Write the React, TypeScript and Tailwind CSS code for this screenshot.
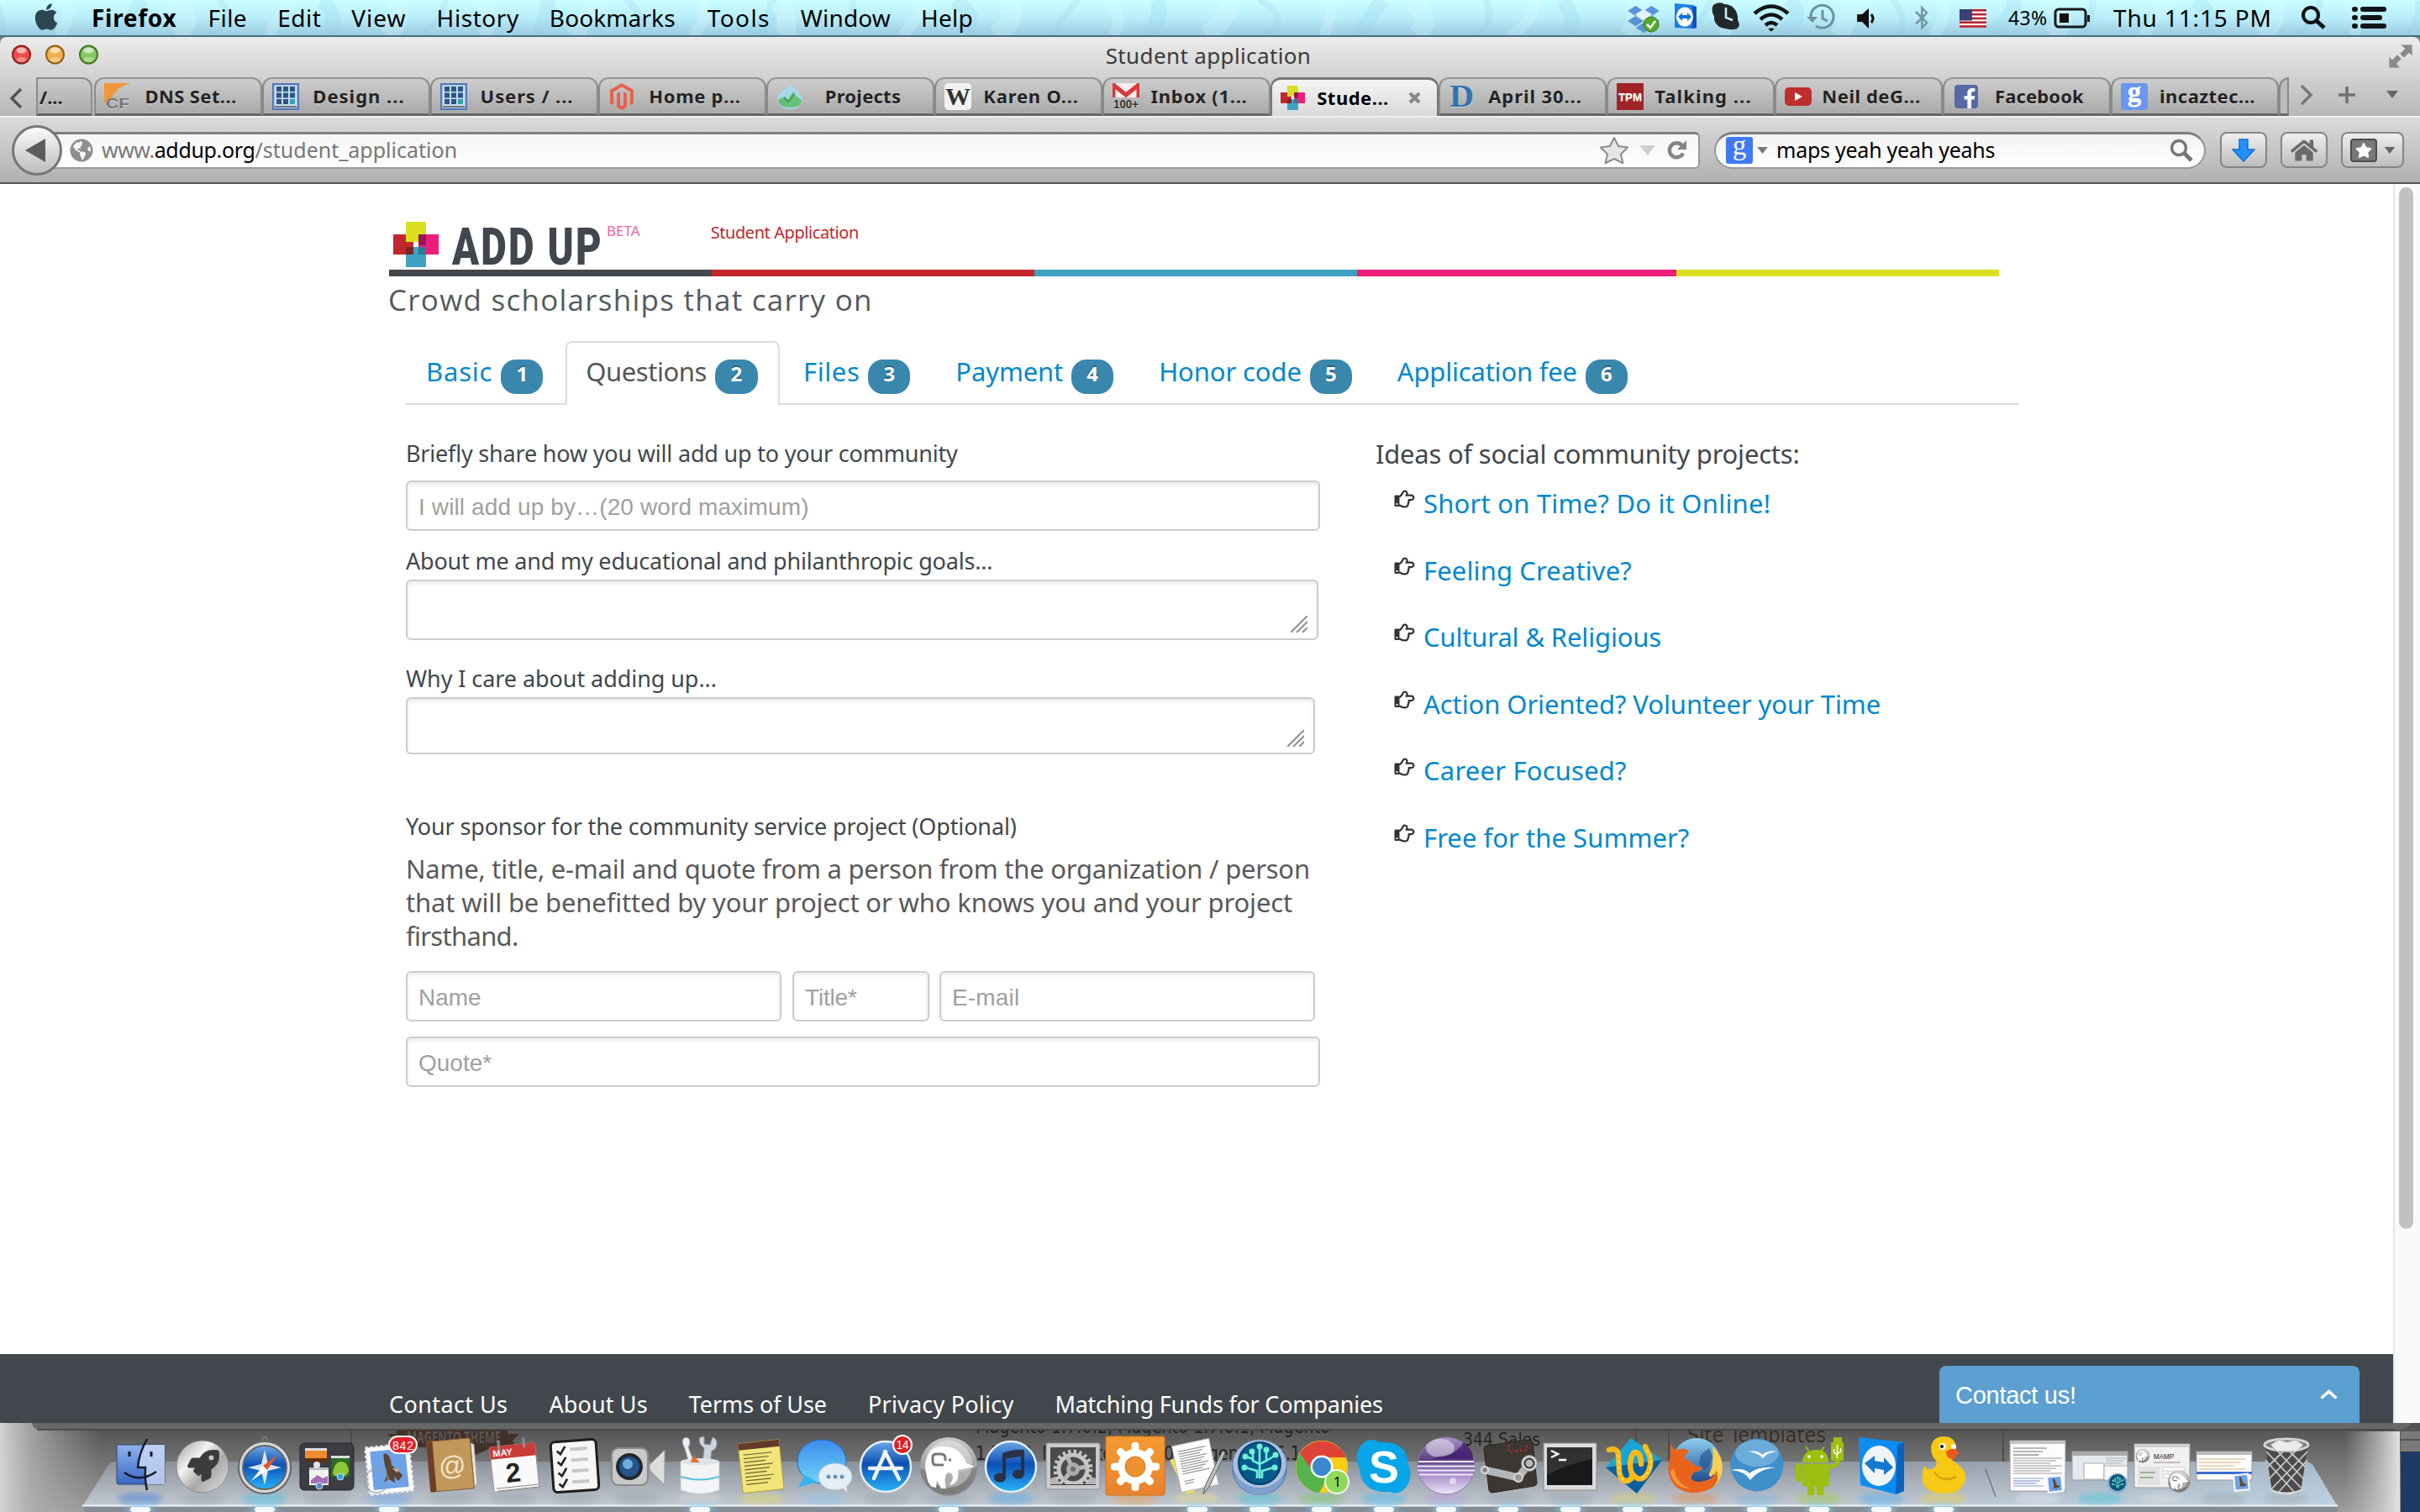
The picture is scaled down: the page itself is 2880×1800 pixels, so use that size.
import React, { useLayoutEffect, useRef } from 'react';
import {
  FaApple, FaDropbox, FaBluetoothB, FaHome, FaGlobeAmericas, FaMagento,
  FaFacebookF, FaStar, FaRegHandPointRight, FaRocket,
} from 'react-icons/fa';

const noto = "font-['Noto_Sans','Open_Sans',sans-serif]";
const sans = "font-['Liberation_Sans',Arial,sans-serif]";

/* A single line of text tracked so that it fills the given width. */
function Fit({ w, children, className = '' }: { w: number; children: string; className?: string }) {
  const ref = useRef<HTMLSpanElement>(null);
  useLayoutEffect(() => {
    const el = ref.current;
    if (!el) return;
    el.style.letterSpacing = '0px';
    const natural = el.offsetWidth;
    el.style.letterSpacing = `${(w - natural) / children.length}px`;
  }, [w, children]);
  return <span ref={ref} className={`inline-block shrink-0 whitespace-pre ${className}`}>{children}</span>;
}

const Caret = ({ className = '' }) => (
  <svg className={className} viewBox="0 0 14 9"><path d="M0 0h14L7 9z" fill="currentColor" /></svg>
);

/* ---------- menu bar ---------- */
function MenuBar() {
  return (
    <header className={`relative flex h-11 shrink-0 items-stretch overflow-hidden border-b-2 border-[#44707f] bg-linear-to-b from-[#c9ffff] via-[#b9eefb] to-[#9ccbe0] text-[28px] leading-[43px] text-black ${noto}`}>
      <svg className="absolute inset-0 h-full w-full opacity-40" viewBox="0 0 2880 44" preserveAspectRatio="none">
        {Array.from({ length: 48 }, (_, i) => (
          <path key={i} d={`M${i * 62 + (i * 37) % 29} 44 q${8 + (i % 5) * 6} -22 ${(i % 3) * 18 - 8} -44`} stroke={i % 2 ? '#e6ffff' : '#8fcbe8'} strokeWidth={8 + (i % 4) * 5} fill="none" opacity=".55" />
        ))}
      </svg>
      <div className="relative flex w-full">
        <FaApple className="mt-[2px] ml-[38px] h-9 w-[34px] text-[#2c4652]" />
        <Fit w={101} className="ml-[37px] font-bold">Firefox</Fit>
        <Fit w={47} className="ml-[37px]">File</Fit>
        <Fit w={52} className="ml-9">Edit</Fit>
        <Fit w={65} className="ml-[36px]">View</Fit>
        <Fit w={98} className="ml-[36px]">History</Fit>
        <Fit w={150} className="ml-[36px]">Bookmarks</Fit>
        <Fit w={75} className="ml-[38px]">Tools</Fit>
        <Fit w={107} className="ml-[36px]">Window</Fit>
        <Fit w={62} className="ml-[36px]">Help</Fit>
        <div className="flex-1" />
        <svg className="h-[42px] w-[918px] shrink-0" viewBox="1930 0 918 42">
          <g transform="translate(1937 4)">
            <FaDropbox x="0" y="0" size={38} color="#5b93d8" />
            <path d="M9 13l10-6 10 6-10 7z" fill="#e3f3fd" />
            <circle cx="28" cy="25" r="9" fill="#55a82c" stroke="#3b7d1c" /><path d="M23 25l4 4 6-8" stroke="#fff" strokeWidth="2.500" fill="none" />
          </g>
          <path d="M1993 4l22 2 4 2v25l-5 1-21-1z" fill="#1b7fea" /><path d="M2014 8h5v25l-5 1z" fill="#1150c0" />
          <ellipse cx="2005" cy="20" rx="10" ry="11.500" fill="#fff" /><path d="M1997 20l5-5v3h6v-3l5 5-5 5v-3h-6v3z" fill="#1271dd" />
          <path d="M2039 6c5-4 11-3 13-1 10 0 17 8 16 19 4 6 1 11-5 11-5 1-7-1-10-1-9-1-14-8-13-15-3-4-3-10-1-13z" fill="#22282b" />
          <path d="M2054 9v12l8 3" stroke="#c8f3fb" strokeWidth="2.500" fill="none" />
          <g fill="none" stroke="#0f1416" strokeWidth="4.500">
            <path d="M2088 16q20-17 40 0" /><path d="M2095 23q13-11 26 0" /><path d="M2101 30q7-6 14 0" />
          </g>
          <path d="M2108 37.500l-3.500-3q3.500-2 7 0z" />
          <g stroke="#6f929e" strokeWidth="3" fill="none"><path d="M2155 20a13.500 13.500 0 1 1 6 11" /><path d="M2169 12v10l6 3" /></g><path d="M2150 20h13l-6 7z" fill="#6f929e" />
          <path d="M2210 17h6l8-7v24l-8-8h-6z" fill="#111" /><path d="M2227 17q4 5 0 10" stroke="#111" strokeWidth="3" fill="none" />
          <FaBluetoothB x="2272" y="6" size={30} color="#7498a5" />
          <g><rect x="2332" y="11" width="32" height="22" fill="#fff" />
            {[11, 15.8, 20.6, 25.4, 30.2].map((y) => <rect key={y} x="2332" y={y} width="32" height="2.600" fill="#b9202c" />)}
            <rect x="2332" y="11" width="15" height="13.500" fill="#3b3f74" /></g>
          <rect x="2446" y="11" width="36" height="21" rx="4" fill="none" stroke="#15191b" strokeWidth="3" /><rect x="2451" y="16" width="11" height="11" fill="#111" /><rect x="2484" y="18" width="3" height="8" fill="#111" />
          <g stroke="#0d1011" fill="none" strokeWidth="4"><circle cx="2750" cy="18" r="9" /><path d="M2757 25l9 8" strokeWidth="5" /></g>
          <g fill="#101517">
            {[8, 18, 28].map((y, i) => <React.Fragment key={y}><rect x="2799" y={y} width="7" height="6" rx="3" /><rect x={2809} y={y} width={i === 1 ? 26 : 31} height="6" rx="3" /></React.Fragment>)}
          </g>
          <text x="2390" y="30" fontSize="23" textLength="46" fontFamily="Noto Sans">43%</text>
          <text x="2515" y="32" fontSize="28" textLength="188" fontFamily="Noto Sans">Thu 11:15 PM</text>
        </svg>
        <div className="w-8" />
      </div>
    </header>
  );
}

/* ---------- browser chrome ---------- */
const GIcon = ({ soft = false }) => (
  <svg viewBox="0 0 32 32" className="h-full w-full"><rect width="32" height="32" rx="3" fill={soft ? '#6a97ee' : '#4079f5'} />
    <text x="16" y="21" textAnchor="middle" fontSize="33" fill="#fff" fontFamily="Liberation Serif">g</text></svg>
);
const GridIcon = () => (
  <svg viewBox="0 0 32 32" className="h-full w-full"><rect x="1" y="1" width="30" height="30" fill="#c7dcee" stroke="#5577b8" strokeWidth="2.5" />
    {[0, 1, 2].map((r) => [0, 1, 2].map((c) => <rect key={`${r}${c}`} x={5 + c * 8} y={4 + r * 7.5} width="6" height="6" fill={r === 2 && c === 2 ? '#35a3a5' : '#2c5688'} />))}
    <path d="M3 28h26" stroke="#777" strokeWidth="2" /></svg>
);
const PlusMark = () => (
  <svg viewBox="0 0 54 54" className="h-full w-full">
    <rect x="15" y="0" width="24" height="24" fill="#d9e021" /><rect x="0" y="15" width="24" height="24" fill="#c1272d" />
    <rect x="30" y="15" width="24" height="24" fill="#ec1e79" /><rect x="15" y="30" width="24" height="24" fill="#3fa2c0" />
    <path d="M15 15h9v9h-9z" fill="#d9e021" /><path d="M30 15h9v13h-9z" fill="#98155a" /><path d="M15 30h9v9h-9z" fill="#7b2327" /><path d="M30 30h9v9h-9z" fill="#2d7b92" />
    <rect x="24" y="24" width="6" height="6" fill="#fff" /></svg>
);

const tabs: { t: string; w: number; icon: React.ReactNode; active?: boolean }[] = [
  { t: 'DNS Set...', w: 109, icon: <svg viewBox="0 0 32 32"><path d="M0 0h32q-18 4-24 20l-8 4z" fill="#f0973c" /><text x="2" y="30" fontSize="17" fontWeight="700" fill="#777" textLength="28" lengthAdjust="spacingAndGlyphs" fontFamily="Liberation Sans">CF</text></svg> },
  { t: 'Design ...', w: 109, icon: <GridIcon /> },
  { t: 'Users / ...', w: 111, icon: <GridIcon /> },
  { t: 'Home p...', w: 109, icon: <FaMagento className="h-8 w-8 text-[#e8604c]" /> },
  { t: 'Projects', w: 90, icon: <svg viewBox="0 0 32 32"><path d="M16 1C22 7 31 12 31 20a15 11 0 0 1-30 0C1 12 10 7 16 1z" fill="#a7d8e8" /><path d="M2 20l8-4 4 4 6-10 4 6 6 4q0 9-14 9T2 20z" fill="#68bf78" /><path d="M9 17l5 5 7-9" stroke="#4aa45b" strokeWidth="2.5" fill="none" /></svg> },
  { t: 'Karen O...', w: 113, icon: <svg viewBox="0 0 32 32"><rect width="32" height="32" rx="5" fill="#f2f2f2" /><text x="1" y="26" fontSize="29" textLength="30" lengthAdjust="spacingAndGlyphs" fill="#333" fontFamily="Liberation Serif">W</text></svg> },
  { t: 'Inbox (1...', w: 115, icon: <svg viewBox="0 0 32 32"><rect width="32" height="17" fill="#f4eeee" /><path d="M1 17V2l15 12L31 2v15" stroke="#d8393b" strokeWidth="5" fill="none" /><text x="1" y="30" fontSize="15" fontWeight="700" textLength="30" lengthAdjust="spacingAndGlyphs" fill="#333" fontFamily="Liberation Sans">100+</text></svg> },
  { t: 'Stude...', w: 86, icon: <div className="h-[29px] w-[29px]"><PlusMark /></div>, active: true },
  { t: 'April 30...', w: 112, icon: <svg viewBox="0 0 32 32"><text x="1" y="28" fontSize="37" fontWeight="700" textLength="29" lengthAdjust="spacingAndGlyphs" fill="#3174b0" fontFamily="Liberation Serif">D</text></svg> },
  { t: 'Talking ...', w: 115, icon: <svg viewBox="0 0 32 32"><rect width="32" height="32" fill="#a02326" /><text x="2" y="21" fontSize="13" textLength="28" lengthAdjust="spacingAndGlyphs" fill="#fff" fontWeight="700" fontFamily="Liberation Sans">TPM</text></svg> },
  { t: 'Neil deG...', w: 117, icon: <svg viewBox="0 0 32 32"><rect y="5" width="32" height="22" rx="5" fill="#bf2e2e" /><path d="M12 11v10l9-5z" fill="#fff" /></svg> },
  { t: 'Facebook', w: 106, icon: <div className="ml-[2px] flex h-7 w-7 items-end justify-end rounded-sm bg-[#5769a5] text-white"><FaFacebookF className="h-6 w-5" /></div> },
  { t: 'incaztec...', w: 114, icon: <GIcon soft /> },
];

function TabStrip() {
  return (
    <div className={`flex h-[46px] shrink-0 items-end text-[22px] font-bold text-[#232323] [text-shadow:0_1px_0_rgba(255,255,255,0.5)] ${noto}`}>
      <svg className="mb-2 ml-[11px] h-[26px] w-[17px] shrink-0" viewBox="0 0 17 26"><path d="M14 2L3 13l11 11" fill="none" stroke="#555" strokeWidth="3.5" /></svg>
      <div className="ml-[15px] h-[46px] w-[67px] shrink-0 rounded-tr-xl border-t-2 border-r-2 border-b-3 border-l-2 border-[#8d8d8d] border-b-[#666] bg-linear-to-b from-[#cbcbcb] to-[#ababab] pl-[2px] leading-[42px]">/...</div>
      <div className="flex w-[2602px] shrink-0 pl-[2px]">
        {tabs.map((tab) => (
          <div key={tab.t} className={tab.active
            ? 'flex h-[46px] w-[200px] shrink-0 items-center rounded-t-xl border-x-2 border-t-3 border-[#777] bg-linear-to-b from-[#f4f4f4] to-[#dadada] text-black'
            : 'flex h-[46px] w-[200px] shrink-0 items-center rounded-t-xl border-x-2 border-t-2 border-b-3 border-x-[#8a8a8a] border-t-[#939393] border-b-[#666] bg-linear-to-b from-[#cdcdcd] to-[#aaaaaa]'}>
            <div className="ml-[10px] flex h-8 w-8 shrink-0 items-center [&>svg]:h-8 [&>svg]:w-8">{tab.icon}</div>
            <div className={tab.active ? 'w-[108px] text-center' : 'w-[142px] text-center'}><Fit w={tab.w}>{tab.t}</Fit></div>
            {tab.active && <svg className="ml-[12px] h-[15px] w-[15px]" viewBox="0 0 15 15"><path d="M2 2l11 11M13 2L2 13" stroke="#888" strokeWidth="4" /></svg>}
          </div>
        ))}
      </div>
      <div className="h-[46px] w-[12px] shrink-0 rounded-tl-xl border-t-2 border-r-2 border-b-3 border-l-2 border-[#8a8a8a] border-b-[#666] bg-[#bcbcbc]" />
      <svg className="mb-3 ml-[12px] h-[26px] w-[17px] shrink-0" viewBox="0 0 17 26"><path d="M3 2l11 11L3 24" fill="none" stroke="#777" strokeWidth="3.5" /></svg>
      <svg className="mb-[15px] ml-[30px] h-5 w-5 shrink-0" viewBox="0 0 20 20"><path d="M10 0v20M0 10h20" stroke="#6f6f6f" strokeWidth="3.5" /></svg>
      <Caret className="mb-[21px] ml-[37px] h-[9px] w-[14px] shrink-0 text-[#666]" />
    </div>
  );
}

const toolBtn = 'flex h-[43px] shrink-0 items-center justify-center rounded-lg border-2 border-[#858585] bg-linear-to-b from-[#efefef] to-[#bdbdbd]';

function Toolbar() {
  return (
    <div className={`flex h-[79px] shrink-0 items-center border-t-2 border-[#f0f0f0] bg-linear-to-b from-[#dbdbdb] to-[#b1b1b1] text-[25px] ${noto}`}>
      <div className="z-10 ml-[14px] flex h-[60px] w-[60px] shrink-0 items-center justify-center rounded-full border-3 border-[#777] bg-linear-to-b from-[#fbfbfb] to-[#bdbdbd]">
        <svg className="mr-1 h-7 w-6" viewBox="0 0 24 28"><path d="M24 0v28L0 14z" fill="#5c5c5c" /></svg>
      </div>
      <div className="-ml-[20px] flex h-11 w-[1969px] shrink-0 items-center rounded-r-md border-2 border-t-3 border-[#989898] border-t-[#7d7d7d] bg-linear-to-b from-[#f6f6f6] to-white">
        <FaGlobeAmericas className="ml-[27px] h-7 w-7 text-[#8e8e8e]" />
        <Fit w={63} className="ml-[10px] text-[#777]">www.</Fit>
        <Fit w={120} className="text-black">addup.org</Fit>
        <Fit w={241} className="text-[#777]">/student_application</Fit>
        <div className="flex-1" />
        <svg className="h-8 w-[34px]" viewBox="0 0 34 32"><path d="M17 1l5 10 11 1.500-8 8 2.500 11L17 26 6.500 31.500 9 20.500l-8-8L12 11z" fill="#e6e6e6" stroke="#8c8c8c" strokeWidth="2" strokeLinejoin="round" /></svg>
        <Caret className="ml-[13px] h-[14px] w-[19px] text-[#cfcfcf]" />
        <svg className="mr-[13px] ml-[14px] h-6 w-6" viewBox="0 0 24 24"><path d="M19 15.500a8.500 8.500 0 1 1-1-9" fill="none" stroke="#858585" strokeWidth="4.500" /><path d="M23 0v11H12z" fill="#858585" /></svg>
      </div>
      <div className="ml-[17px] flex h-11 w-[585px] shrink-0 items-center rounded-full border-2 border-t-3 border-[#989898] border-t-[#7d7d7d] bg-linear-to-b from-[#f3f3f3] to-white">
        <div className="ml-[12px] h-8 w-8"><GIcon /></div>
        <Caret className="ml-[5px] h-[8px] w-[13px] text-[#777]" />
        <Fit w={260} className="ml-[10px] text-black">maps yeah yeah yeahs</Fit>
        <div className="flex-1" />
        <svg className="mr-[13px] h-7 w-7" viewBox="0 0 28 28"><circle cx="11" cy="11" r="8.500" fill="none" stroke="#777" strokeWidth="3.500" /><path d="M17 17l9 9" stroke="#777" strokeWidth="5" /></svg>
      </div>
      <div className={`ml-[17px] w-[56px] ${toolBtn}`}><svg className="h-7 w-7" viewBox="0 0 28 28"><path d="M9 1h10v12h8L14 27 1 13h8z" fill="#2491fb" stroke="#0d6fd0" strokeWidth="1.500" /></svg></div>
      <div className={`ml-4 w-[56px] ${toolBtn}`}><FaHome className="h-8 w-8 text-[#6a6a6a]" /></div>
      <div className={`ml-4 w-[75px] ${toolBtn}`}>
        <div className="flex h-7 w-8 items-center justify-center rounded border-2 border-[#4c4c4c] bg-[#777]"><FaStar className="h-5 w-5 text-white" /></div>
        <Caret className="ml-2 h-[8px] w-[14px] text-[#666]" />
      </div>
    </div>
  );
}

/* ---------- page ---------- */
const steps = [
  { t: 'Basic', w: 79, n: '1', first: true }, { t: 'Questions', w: 144, n: '2', active: true }, { t: 'Files', w: 67, n: '3' },
  { t: 'Payment', w: 128, n: '4' }, { t: 'Honor code', w: 170, n: '5' }, { t: 'Application fee', w: 214, n: '6' },
];
const ideas: [string, number][] = [
  ['Short on Time? Do it Online!', 413], ['Feeling Creative?', 248], ['Cultural & Religious', 283],
  ['Action Oriented? Volunteer your Time', 544], ['Career Focused?', 242], ['Free for the Summer?', 316],
];
const field = 'rounded-md border-2 border-[#cccccc] bg-white shadow-[inset_0_3px_4px_rgba(0,0,0,0.08)]';
const input = `${field} flex h-[60px] items-center pt-[3px] pl-[13px] text-[28px] text-[#a0a0a0] ${sans}`;
const Grip = () => (
  <svg className="h-5 w-5" viewBox="0 0 20 20"><path d="M0 20L20 0M7 20L20 7M14 20l6-6" stroke="#8f8f8f" strokeWidth="2" /></svg>
);

function Page() {
  return (
    <main className={`flex min-h-0 flex-1 flex-col bg-white ${noto}`}>
      <div className="flex h-[102px] items-start pl-[468px]">
        <div className="mt-[45px] h-[54px] w-[54px]"><PlusMark /></div>
        <div className="mt-[42px] ml-4 w-[182px]">
          <div className="w-[240px] origin-left scale-x-[0.76] text-[62px] leading-[66px] font-black text-[#41474d] font-['Roboto',sans-serif]"><Fit w={236}>ADD UP</Fit></div>
        </div>
        <Fit w={40} className="mt-[46px] ml-[2px] text-[17px] leading-[20px] text-[#f3609f]">BETA</Fit>
        <Fit w={176} className="mt-[42px] ml-[84px] text-[20px] leading-[32px] text-[#c1272d]">Student Application</Fit>
      </div>
      <div className="flex h-2 shrink-0 pl-[463px]">
        <div className="w-[384px] bg-[#41474d]" /><div className="w-[384px] bg-[#c1272d]" /><div className="w-[384px] bg-[#3fa2c0]" />
        <div className="w-[380px] bg-[#ec1e79]" /><div className="w-[384px] bg-[#d9e021]" />
      </div>
      <div className="h-[77px] shrink-0 pl-[462px] text-[35px] leading-[55px] text-[#54595e] font-['Open_Sans',sans-serif]"><Fit w={577}>Crowd scholarships that carry on</Fit></div>
      <nav className="ml-[483px] flex h-[76px] w-[1920px] shrink-0 text-[31px] text-[#0088cc]">
        {steps.map((s) => (
          <div key={s.n} className={s.active
            ? 'flex h-[76px] rounded-t-lg border-2 border-b-0 border-[#dddddd] pr-6 pl-[22px] leading-[68px] text-[#555555]'
            : s.first
              ? 'flex h-[76px] border-b-2 border-[#dddddd] pt-[2px] pr-[27px] pl-6 leading-[68px]'
              : 'flex h-[76px] border-b-2 border-[#dddddd] pt-[2px] pr-[26px] pl-[28px] leading-[68px]'}>
            <Fit w={s.w}>{s.t}</Fit>
            <span className={s.active
              ? 'mt-5 ml-[10px] h-[41px] w-[51px] rounded-[18px] bg-[#3a87ad] text-center text-[24px] leading-[34px] font-bold text-white [text-shadow:0_-2px_0_rgba(0,0,0,0.25)]'
              : 'mt-5 ml-[10px] h-[41px] w-[50px] rounded-[18px] bg-[#3a87ad] text-center text-[24px] leading-[34px] font-bold text-white [text-shadow:0_-2px_0_rgba(0,0,0,0.25)]'}>{s.n}</span>
          </div>
        ))}
        <div className="flex-1 border-b-2 border-[#dddddd]" />
      </nav>
      <div className="flex pl-[483px]">
        <section className="flex w-[1154px] flex-col pt-[38px] text-[27px] leading-10 text-[#41474d]">
          <div className="h-10"><Fit w={657}>Briefly share how you will add up to your community</Fit></div>
          <div className={`mt-3 w-[1088px] ${input}`}><Fit w={465}>I will add up by…(20 word maximum)</Fit></div>
          <div className="mt-4 h-10"><Fit w={698}>About me and my educational and philanthropic goals...</Fit></div>
          <div className={`mt-[2px] flex h-[72px] w-[1086px] items-end justify-end pr-[11px] pb-[7px] ${field}`}><Grip /></div>
          <div className="mt-[26px] h-10"><Fit w={370}>Why I care about adding up...</Fit></div>
          <div className={`mt-[2px] flex h-[68px] w-[1082px] items-end justify-end pr-[11px] pb-[7px] ${field}`}><Grip /></div>
          <div className="mt-[66px] h-10"><Fit w={727}>Your sponsor for the community service project (Optional)</Fit></div>
          <div className="mt-[10px] flex h-[120px] flex-col items-start text-[31px] text-[#58595b]">
            <Fit w={1076}>Name, title, e-mail and quote from a person from the organization / person</Fit>
            <Fit w={1055}>that will be benefitted by your project or who knows you and your project</Fit>
            <Fit w={134}>firsthand.</Fit>
          </div>
          <div className="mt-[22px] flex">
            <div className={`w-[447px] ${input}`}><Fit w={75}>Name</Fit></div>
            <div className={`ml-[13px] w-[163px] ${input}`}><Fit w={62}>Title*</Fit></div>
            <div className={`ml-3 w-[447px] ${input}`}><Fit w={80}>E-mail</Fit></div>
          </div>
          <div className={`mt-[18px] w-[1088px] ${input}`}><Fit w={87}>Quote*</Fit></div>
        </section>
        <aside className="pt-[38px] text-[31px] text-[#41474d]">
          <div className="h-10 leading-10"><Fit w={504}>Ideas of social community projects:</Fit></div>
          {ideas.map(([t, w]) => (
            <div key={t} className="flex h-[79.6px] items-center pl-[21px] text-[#0088cc]">
              <FaRegHandPointRight className="mb-[11px] h-[24px] w-[27px] text-[#333]" />
              <Fit w={w} className="ml-[9px] leading-[79.6px]">{t}</Fit>
            </div>
          ))}
        </aside>
      </div>
      <footer className="mt-auto flex h-[82px] shrink-0 items-end bg-[#42474d] pl-[463px] text-[27px] text-white">
        <Fit w={141} className="leading-[44px]">Contact Us</Fit>
        <Fit w={117} className="ml-[49px] leading-[44px]">About Us</Fit>
        <Fit w={164} className="ml-[49px] leading-[44px]">Terms of Use</Fit>
        <Fit w={173} className="ml-[49px] leading-[44px]">Privacy Policy</Fit>
        <Fit w={390} className="ml-[49px] leading-[44px]">Matching Funds for Companies</Fit>
        <div className={`ml-auto mr-10 flex h-[68px] w-[500px] items-center justify-between rounded-t-lg bg-[#5c9fd1] pt-[3px] pr-[26px] pl-[19px] text-[29px] ${sans}`}>
          <Fit w={144}>Contact us!</Fit>
          <svg className="mb-1 h-3 w-[21px]" viewBox="0 0 21 12"><path d="M1.500 10.500l9-8 9 8" fill="none" stroke="#fff" strokeWidth="3.500" /></svg>
        </div>
      </footer>
    </main>
  );
}

/* ---------- dock ---------- */
const MiniTree = ({ x = 0, y = 0, s = 1 }) => (
  <g transform={`translate(${x} ${y}) scale(${s})`} stroke="#6ff0d8" strokeWidth="2.600" fill="none">
    <path d="M37 55V18M34 55V46l-14-4M40 55V46l14-4M37 38l-8-4v-10M37 38l8-4v-12M29 32l-8-3M45 34l10-6" />
    {[[37, 17], [19, 42], [55, 42], [20, 29], [28, 23], [45, 21], [56, 27]].map(([cx, cy]) => <circle key={`${cx}-${cy}`} cx={cx} cy={cy} r="2.200" fill="#6ff0d8" />)}
  </g>
);
const Stamp = ({ x = 0, y = 0, s = 1 }) => (
  <g transform={`translate(${x} ${y}) scale(${s}) rotate(-6 37 37)`}>
    <rect x="11" y="13" width="52" height="56" fill="#fff" stroke="#eee" strokeWidth="3" strokeDasharray="3 3" /><rect x="16" y="18" width="42" height="46" fill="#6da2e6" />
    <path d="M32 22q8 0 8 14l12 14-6 6-4-6 0 8-7-5-6 3q6-10 4-16t-1-18z" fill="#5a4634" /><path d="M40 40l8 2-2 4z" fill="#d9b978" />
  </g>
);
const MampEl = ({ x = 0, y = 0, s = 1 }) => (
  <g transform={`translate(${x} ${y}) scale(${s})`}>
    <circle cx="37" cy="37" r="34" fill="url(#silver)" /><path d="M3 40q34 14 68-2A34 34 0 0 1 3 40z" fill="#777" opacity=".6" /><circle cx="37" cy="35" r="28" fill="#fff" opacity=".35" />
    <path d="M34 64h-6l-5-10-1 9-5-1q-6-6-6-13-3-10-1-17 2-9 6-13 7-6 15-5 12 0 19 7 7 8 8 13l10 4-20 4q2 9-3 15-4 4-7 2 6-6 3-12-4-4-7 0-3 6 0 17z" fill="#fff" />
    <path d="M31 36h-9q-4 0-4-4v-5q0-4 4-4h6q5 0 5 5v3M37 30h3" fill="none" stroke="#777" strokeWidth="3" />
  </g>
);
const lines = (x: number, y: number, w: number, n: number, step: number, c = '#999') =>
  Array.from({ length: n }, (_, i) => <path key={`${y}-${i}`} d={`M${x} ${y + i * step}h${w - (i % 3) * w * 0.12}`} stroke={c} strokeWidth="1.200" />);
const Bird = ({ d }: { d: string }) => <path d={d} fill="#fff" />;
const eight = [0, 45, 90, 135, 180, 225, 270, 315];

const icons: { el: React.ReactNode; on?: boolean; glow?: string }[] = [
  { on: true, glow: '#3d78dd', el: <><rect x="9" y="12" width="57" height="47" rx="2" fill="url(#finder)" stroke="#35496f" /><path d="M42 12h24v47H43q-2-10-1-20h-8q1-14 8-27z" fill="#c7d5f3" opacity=".85" /><path d="M45 5q-10 18-11 34h9q-1 14 2 27" stroke="#151b28" strokeWidth="2.500" fill="none" /><path d="M18 45q18 13 38-1" stroke="#151b28" strokeWidth="2.500" fill="none" /><path d="M24 20v6M50 20v6" stroke="#151b28" strokeWidth="3" /></> },
  { el: <><circle cx="37" cy="38" r="31" fill="url(#metal)" stroke="#8a8a8a" /><FaRocket x="19" y="18" size={38} color="#3c3c3c" /></> },
  { on: true, glow: '#3fc2e8', el: <><circle cx="37" cy="6" r="3" fill="none" stroke="#777" strokeWidth="2" /><circle cx="37" cy="39" r="31" fill="#d9d9d9" stroke="#666" strokeWidth="2" /><circle cx="37" cy="39" r="26" fill="url(#blue)" stroke="#666" strokeWidth="2" /><path d="M37 18l4 17 16 4-16 4-4 17-4-17-16-4 16-4z" fill="#fff" opacity=".85" /><path d="M53 23L40 42l-5-5z" fill="#e8552b" /><path d="M21 55l19-13-5-5z" fill="#fff" /></> },
  { el: <><rect x="5" y="10" width="64" height="56" rx="5" fill="#3b3d42" stroke="#26272b" /><rect x="11" y="16" width="26" height="17" fill="#f08b2d" /><path d="M11 28h26v5H11z" fill="#5b3013" /><path d="M11 16h26v3H11z" fill="#ddd" /><rect x="42" y="25" width="22" height="25" fill="#2d6b22" /><path d="M42 25h22v3H42z" fill="#ddd" /><path d="M44 46q2-14 10-14t9 12l-4 5H46z" fill="#8fc93a" /><rect x="16" y="39" width="23" height="21" fill="#eef4ee" /><path d="M16 39h23v3H16z" fill="#bbb" /><path d="M18 54l8-6 6 4 6-3v9H18z" fill="#a46fb5" /><circle cx="25" cy="36" r="4" fill="#e4e4e4" /><circle cx="53" cy="50" r="4" fill="#3aa0e0" stroke="#ddd" /><circle cx="28" cy="61" r="4" fill="#5c8ad0" stroke="#ddd" /></> },
  { on: true, glow: '#6aa5ee', el: <><Stamp /><circle cx="22" cy="55" r="14" fill="none" stroke="#8fa0b5" strokeWidth="2" opacity=".7" /><rect x="37" y="2" width="33" height="20" rx="10" fill="#e3202a" stroke="#fff" strokeWidth="2" /><text x="41" y="17.500" fontSize="14" fill="#fff" textLength="25" fontFamily="Liberation Sans">842</text></> },
  { el: <g transform="rotate(-5 37 37)"><path d="M62 12l4 2v46l-4 6z" fill="#e9e5dc" stroke="#aaa" /><rect x="10" y="6" width="52" height="60" rx="2" fill="#c1985a" stroke="#805d2c" /><path d="M10 6h7v60h-7z" fill="#6b3f28" /><text x="22" y="48" fontSize="32" fill="#f5e6c6" fontFamily="Liberation Sans">@</text></g> },
  { el: <g transform="rotate(-6 37 37)"><rect x="11" y="12" width="54" height="54" rx="2" fill="#fafafa" stroke="#999" /><path d="M11 12h54v15H11z" fill="#cb3b38" /><text x="14" y="24" fontSize="11" fontWeight="700" fill="#fff" fontFamily="Liberation Sans">MAY</text><path d="M22 5v12M52 5v12" stroke="#8e8e8e" strokeWidth="3" /><text x="27" y="56" fontSize="32" fontWeight="700" fill="#222" fontFamily="Liberation Sans">2</text><path d="M14 62h50M15 65h51" stroke="#888" /></g> },
  { el: <g transform="rotate(-4 37 37)"><rect x="9" y="7" width="54" height="60" rx="5" fill="#f6f6f4" stroke="#1d1d1d" strokeWidth="3" />{[18, 31, 44, 57].map((y) => <g key={y}><path d={`M16 ${y}l4 4 6-9`} stroke="#222" strokeWidth="2.600" fill="none" /><rect x="32" y={y - 3} width="20" height="4" fill="#c8c8c8" /></g>)}</g> },
  { el: <><rect x="6" y="16" width="43" height="44" rx="8" fill="#c9c9c9" stroke="#8a8a8a" strokeWidth="2" /><circle cx="27" cy="38" r="16" fill="#20262e" /><circle cx="27" cy="38" r="12" fill="#24548a" /><circle cx="25" cy="35" r="6" fill="#6db0dc" /><path d="M51 36l18-18v42L51 42z" fill="#dcdcdc" stroke="#999" /></> },
  { on: true, glow: '#dddddd', el: <><path d="M24 34l-5-18q-5-8-1-12 6-2 7 4 0 4-2 7l7 18z" fill="#eef1f4" stroke="#a5adb8" /><path d="M40 34l2-18q-8-6-5-13l5-1v9l7 1 3-9q6 2 5 9-1 6-6 7l-2 16z" fill="#cdd5de" stroke="#8791a0" /><path d="M27 35l4-8 10 8z" fill="#e56f27" /><path d="M14 32h46v34q-23 9-46 0z" fill="#f3f4f5" stroke="#c3c8cb" /><ellipse cx="37" cy="32" rx="23" ry="4" fill="#dfe3e6" /><path d="M26 33l3-8 8 8z" fill="#e56f27" /><path d="M14 50q23 7 46 0" stroke="#57c3e0" strokeWidth="2" fill="none" /></> },
  { glow: '#e8e060', el: <g transform="rotate(-6 37 37)"><rect x="11" y="8" width="49" height="59" fill="#f2e57a" stroke="#b3a23c" /><path d="M11 8h49v8H11z" fill="#64392a" />{lines(16, 22, 34, 9, 4.4, '#6b6432')}</g> },
  { glow: '#8cc8f2', el: <><ellipse cx="34" cy="32" rx="29" ry="26" fill="url(#chat)" stroke="#2470c4" /><path d="M14 48l-8 15 22-7z" fill="#35b4f4" /><ellipse cx="50" cy="50" rx="20" ry="16" fill="#e3eef6" stroke="#a9c0d3" /><path d="M58 62l6 7-1-12z" fill="#e3eef6" />{[42, 50, 58].map((x) => <circle key={x} cx={x} cy="50" r="2.500" fill="#6d95b5" />)}</> },
  { el: <><circle cx="36" cy="38" r="30" fill="url(#blue)" stroke="#e7eff7" strokeWidth="2.500" /><path d="M36 20L22 52M35 20l17 33M17 40h38" stroke="#eef5fb" strokeWidth="4.500" strokeLinecap="round" /><circle cx="56" cy="12" r="11" fill="#de1f26" stroke="#fff" strokeWidth="2" /><text x="48.500" y="17" fontSize="14" textLength="15" fill="#fff" fontFamily="Liberation Sans">14</text></> },
  { on: true, el: <MampEl /> },
  { glow: '#4aa7ee', el: <><circle cx="37" cy="38" r="30" fill="url(#blue)" stroke="#e7eff7" strokeWidth="2.500" /><path d="M27 22q14-5 26-4v8q-13 0-26 4z" fill="#2a3046" /><path d="M29 50V26M51 46V20" stroke="#2a3046" strokeWidth="4" fill="none" /><ellipse cx="24" cy="51" rx="7" ry="5.500" fill="#2a3046" /><ellipse cx="46" cy="47" rx="7" ry="5.500" fill="#2a3046" /></> },
  { el: <><rect x="5" y="10" width="64" height="55" rx="2" fill="#c9cbcc" stroke="#8c8c8c" /><rect x="10" y="15" width="54" height="45" fill="#4a4b4d" /><path d="M10 60v-8l6-2 8 10zM64 60v-8l-6-2-8 10z" fill="#b5b5b5" /><circle cx="37" cy="41" r="21" fill="none" stroke="#c4c6c8" strokeWidth="5" strokeDasharray="3.300 3.300" /><circle cx="37" cy="41" r="17" fill="none" stroke="#c4c6c8" strokeWidth="5" /><path d="M37 41l16-3M37 41L26 54M37 41L30 26" stroke="#b5b7b9" strokeWidth="5" /><circle cx="37" cy="41" r="8" fill="#a9abad" /><circle cx="37" cy="41" r="3" fill="#6d6f71" /><path d="M10 59.500h54" stroke="#3f3f3f" /></> },
  { glow: '#f5a04a', el: <><rect x="2" y="2" width="70" height="70" rx="2" fill="url(#orange)" stroke="#d57219" /><g fill="#fff"><circle cx="37" cy="38" r="21" />{eight.map((a) => <rect key={a} x="32.500" y="9" width="9" height="16" rx="4" transform={`rotate(${a} 37 38)`} />)}</g><circle cx="37" cy="38" r="12" fill="#ef9130" stroke="#d9761b" /></> },
  { on: true, glow: '#f3e58a', el: <><path d="M4 30l18-4 12 42-10 3z" fill="#f1e053" /><g transform="rotate(-12 37 37)"><rect x="12" y="8" width="45" height="56" fill="#fdfdfd" stroke="#bbb" />{lines(18, 16, 33, 10, 3)}{lines(18, 52, 12, 2, 3)}</g><path d="M67 19l3 3-19 40-7 9 2-10z" fill="#b9bdc1" stroke="#5a5d60" /></> },
  { on: true, glow: '#3ac4d8', el: <><ellipse cx="37" cy="40" rx="33" ry="32" fill="#5c7fb4" /><path d="M6 48q30 22 62 0-8 22-31 24Q14 70 6 48z" fill="#7ea0cf" /><ellipse cx="37" cy="35" rx="32" ry="29" fill="#a9bfe0" stroke="#6d8fbf" /><circle cx="37" cy="34" r="25" fill="#07598c" stroke="#063f68" strokeWidth="2" /><MiniTree y={-3} /></> },
  { on: true, glow: '#76c653', el: <><circle cx="37" cy="38" r="31" fill="#f9cd13" /><path d="M11 22a31 31 0 0 0 23 47l14-25-11-6z" fill="#56b34b" /><path d="M11 22a31 31 0 0 1 55 5H40l-14 16z" fill="#df4335" /><circle cx="37" cy="38" r="13.500" fill="#fff" /><circle cx="37" cy="38" r="11" fill="#3c88cf" /><circle cx="55" cy="56" r="14" fill="#8ed85a" stroke="#f0fbe8" strokeWidth="2" /><text x="51" y="62" fontSize="16" fontFamily="Noto Sans">1</text></> },
  { on: true, glow: '#3fbcf0', el: <><path d="M10 12q10-10 22-3 32-2 34 26 6 14-2 27-10 11-20 6-34 2-36-28-8-14 2-28z" fill="#08a5e8" /><text x="37" y="57" textAnchor="middle" fontSize="54" fontWeight="700" fill="#fff" fontFamily="Liberation Sans">S</text></> },
  { on: true, glow: '#b69bd8', el: <><circle cx="37" cy="37" r="34" fill="url(#purple)" stroke="#8d7aa8" /><path d="M4 32h66M3 37.500h68M3 42.500h68M5 47.500h64" stroke="#efe9f7" strokeWidth="2" /><ellipse cx="30" cy="16" rx="17" ry="11" fill="#fff" opacity=".45" /><path d="M28 26q20-1 30-17 12 10 11 20H20z" fill="#3d1866" opacity=".75" /><circle cx="45" cy="55" r="4" fill="#fff" opacity=".5" /></> },
  { on: true, el: <><path d="M11 13l51-7q3 0 4 3l5 48q0 3-3 4l-50 8q-3 0-4-3L8 17q0-3 3-4z" fill="#3c3732" stroke="#2a241e" /><path d="M37 12l1 9 21-3v-5" stroke="#b52a26" strokeWidth="2.500" strokeDasharray="2.500 3" fill="none" /><path d="M9 42l40 9 12-16" stroke="#b4b6b8" strokeWidth="9" fill="none" strokeLinecap="round" strokeLinejoin="round" /><circle cx="9" cy="42" r="4" fill="#888" stroke="#ddd" strokeWidth="2" /><circle cx="49" cy="51" r="5" fill="#999" stroke="#ddd" strokeWidth="2" /><circle cx="62" cy="34" r="9.500" fill="#d4d4d4" stroke="#8b8b8b" /><circle cx="62" cy="34" r="5.500" fill="#b9b9b9" stroke="#333" strokeWidth="2" /></> },
  { on: true, el: <><rect x="5" y="10" width="63" height="56" fill="#dcdcdc" stroke="#888" /><rect x="9" y="15" width="54" height="45" fill="#17191a" /><path d="M63 15v14Q36 34 9 48V15z" fill="#3a3c3d" opacity=".7" /><path d="M14 19l8 4-8 4M23 30h9" stroke="#fff" strokeWidth="2.500" fill="none" /></> },
  { on: true, glow: '#e0cf60', el: <><path d="M35 4l37 26-30 40L5 39z" fill="#1aa4d4" /><path d="M72 30L42 70 5 39z" fill="#0a5f9a" /><g stroke="#f9b916" strokeWidth="6.500" fill="none" strokeLinecap="round"><path d="M9 18q10-3 11 6l1 20q2 12 10 11" /><path d="M52 14q1 4 5 10 4 14-4 24-4 6-10 4-9-4-9-16 1-14 6-15 7 0 7 14" /><path d="M31 55q6-2 5-8" /></g><path d="M20 24l1 20q2 11 10 11" stroke="#fde27a" strokeWidth="2" strokeDasharray="3 4" fill="none" /><path d="M54 18q9 14 2 26-5 8-12 6" stroke="#fde27a" strokeWidth="2" strokeDasharray="3 4" fill="none" /></> },
  { on: true, glow: '#f08a3a', el: <><circle cx="39" cy="33" r="29" fill="url(#globe)" /><path d="M44 24l10-8 4 10-4 12-6 4-6-8z" fill="#1d4f92" opacity=".6" /><path d="M58 14q12 10 12 26-2 24-26 28 14-8 16-22-6 8-6 0 6-8 4-32z" fill="#f7cf52" /><path d="M8 10q2 7 8 8 10-4 14 2-6 4-5 8 6 3 12 8 6 4 10 2-2 6-10 6-8 8-1 11 10 3 20-3 6-5 6-10 6 12-4 21Q46 70 32 69 10 66 6 46q-2-12 2-20z" fill="#e8641c" /><path d="M12 40q2 18 20 24-20 0-24-20z" fill="#f9973a" /></> },
  { on: true, glow: '#7fb4dd', el: <><circle cx="37" cy="36" r="31.500" fill="#3f8fcb" /><ellipse cx="37" cy="22" rx="26" ry="16" fill="#8ac0e5" opacity=".6" /><Bird d="M26 20q13-2 17 4 6-6 18-4-12 1-17 8-6-7-18-8z" /><Bird d="M6 42q16-3 22 4 10-9 31-7-20 2-30 15-7-11-23-12z" /></> },
  { on: true, glow: '#a5cc39', el: <g fill="#9cbf10"><path d="M17 33q0-14 15.500-15T48 33z" /><path d="M21 14l4 6M43 14l-4 6" stroke="#9cbf10" strokeWidth="1.800" /><circle cx="25" cy="26" r="1.800" fill="#fff" /><circle cx="40" cy="26" r="1.800" fill="#fff" /><rect x="17" y="34.500" width="32" height="27" rx="3" /><rect x="9" y="34" width="7" height="22" rx="3.500" /><rect x="23" y="55" width="8.500" height="17" rx="3" /><rect x="34" y="55" width="8.500" height="17" rx="3" /><path d="M48 38h4q7-1 7-8" stroke="#9cbf10" strokeWidth="5" fill="none" /><rect x="51" y="9" width="15" height="22" rx="1" /><rect x="54" y="3" width="10" height="7" /><path d="M58.500 12v16M54.500 17v4l4 3M62.500 16v4l-4 3" stroke="#fff" strokeWidth="1.500" fill="none" /></g> },
  { on: true, glow: '#4aaaf2', el: <><path d="M10 3l54 6v58l-10 4L12 60z" fill="#0d8df2" /><path d="M64 9l-8 3-2 59 10-4z" fill="#0a62bd" /><ellipse cx="34" cy="37" rx="20" ry="24" fill="#f1f4f7" /><path d="M17 34l12-9v6l11 2v-6l11 12-11 9v-6l-11-2v6z" fill="#1678d2" /></> },
  { on: true, glow: '#f2d53a', el: <><path d="M22 15q2-13 16-13 14 1 14 15 0 8-5 13 18 12 16 22-3 18-24 18Q14 70 12 54q-1-10 2-17 5 8 12 2 4-3 2-8-6-6-6-16z" fill="#f6c915" /><circle cx="36" cy="14" r="4" fill="#fff" /><circle cx="35" cy="14" r="2" /><circle cx="49" cy="14" r="3" fill="#fff" /><path d="M40 20q8-6 14-1 3 4-2 5 1 6-6 5-6-2-6-9z" fill="#e65a1e" /><path d="M26 44q8 14 26 6" stroke="#d8a40b" strokeWidth="2.500" fill="none" /></> },
];
const minis: { el: React.ReactNode; glow?: string }[] = [
  { glow: '#dfe8f2', el: <><rect x="4" y="7" width="66" height="60" fill="#fcfcfc" stroke="#999" /><path d="M4 7h66v4H4z" fill="#c3c3c3" />{lines(8, 16, 40, 3, 4, '#777')}{lines(8, 28, 58, 7, 3)}{lines(8, 52, 36, 4, 3, '#8aa0cf')}<Stamp x={44} y={44} s={0.36} /></> },
  { glow: '#3ec5e0', el: <><rect x="4" y="20" width="66" height="34" fill="#e4e9ee" stroke="#999" /><path d="M4 20h66v5H4z" fill="#aaa" /><rect x="18" y="34" width="24" height="19" fill="#fff" stroke="#aaa" /><rect x="42" y="37" width="28" height="17" fill="#f7f7f7" stroke="#aaa" />{lines(44, 28, 24, 3, 3, '#bbb')}<circle cx="58" cy="58" r="12" fill="#8fb0d8" /><circle cx="58" cy="57" r="10" fill="#0e5577" /><MiniTree x={46} y={45} s={0.33} /></> },
  { glow: '#dddddd', el: <><rect x="4" y="11" width="66" height="52" fill="#f0f0f0" stroke="#999" /><path d="M4 11h66v4H4z" fill="#cfcfcf" /><MampEl x={5} y={16} s={0.24} /><text x="27" y="29" fontSize="9" textLength="24" lengthAdjust="spacingAndGlyphs" fill="#222" fontFamily="Liberation Sans">MAMP</text>{lines(27, 33, 32, 1, 3)}<rect x="8" y="38" width="26" height="22" fill="#e1e1e1" />{lines(11, 45, 18, 2, 6, '#6c9a5c')}<rect x="38" y="39" width="26" height="4" fill="#fff" stroke="#ccc" /><rect x="38" y="47" width="26" height="4" fill="#fff" stroke="#ccc" /><MampEl x={43} y={41} s={0.38} /></> },
  { el: <><rect x="4" y="20" width="66" height="34" fill="#fbfbfb" stroke="#999" /><path d="M4 20h66v4H4z" fill="#bbb" />{lines(7, 29, 55, 4, 4, '#d5b47c')}<path d="M4 44h66v3H4z" fill="#3b6fd0" /><Stamp x={44} y={42} s={0.36} /></> },
  { el: <><path d="M11 10l9 58q17 6 34 0l9-58z" fill="#4b4b4b" /><path d="M13 20l44 46M24 17l34 36M12 30l34 38M62 20L18 66M50 17L16 53M62 30L28 68M38 17l22 22M36 17L14 39" stroke="#c9c9c9" strokeWidth="1.800" /><ellipse cx="37" cy="12" rx="26" ry="7" fill="#7d7d7d" stroke="#d6d6d6" strokeWidth="3" /><path d="M18 12l10-6 10 3 10-3 9 6-8 8H26z" fill="#e9ebec" stroke="#aaa" /><path d="M19 66q18 8 36 0" stroke="#d6d6d6" strokeWidth="3" fill="none" /></> },
];

const Cell = ({ el, on, glow }: { el: React.ReactNode; on?: boolean; glow?: string }) => (
  <div className="flex h-[92px] w-[74px] shrink-0 flex-col items-center">
    <svg className="h-[84px] w-[74px] shrink-0 overflow-visible" viewBox="0 0 74 84">
      <ellipse cx="37" cy="76" rx="27" ry="7" fill={glow || '#8c949c'} opacity={glow ? 0.45 : 0.3} filter="url(#soft)" />
      {el}
    </svg>
    <div className={on ? 'mt-[2px] h-[6px] w-6 rounded-sm bg-[#f5fdff] shadow-[0_0_8px_3px_rgba(140,210,245,0.8)]' : 'h-[8px]'} />
  </div>
);

function Desktop() {
  return (
    <div className="relative h-[106px] shrink-0 overflow-hidden bg-[#808080]">
      <svg className="absolute inset-0 h-full w-full" viewBox="0 1694 2880 106">
        <defs>
          <filter id="soft"><feGaussianBlur stdDeviation="3" /></filter>
          <linearGradient id="bgd" x2="0" y2="1"><stop stopColor="#4f4f4f" /><stop offset=".45" stopColor="#747474" /><stop offset="1" stopColor="#9c9c9c" /></linearGradient>
          <linearGradient id="edge"><stop stopColor="#d4d4d4" /><stop offset=".3" stopColor="#b4b4b4" stopOpacity=".8" /><stop offset="1" stopColor="#a4a4a4" stopOpacity="0" /></linearGradient>
          <linearGradient id="edgeR"><stop stopColor="#c4c4c4" stopOpacity="0" /><stop offset="1" stopColor="#e2e2e2" /></linearGradient>
          <linearGradient id="shelf" x2="0" y2="1"><stop stopColor="#8d949c" /><stop offset="1" stopColor="#c4ccd6" /></linearGradient>
          <linearGradient id="shelfR"><stop offset=".75" stopColor="#bcd3e4" stopOpacity="0" /><stop offset="1" stopColor="#bcd8ec" stopOpacity=".6" /></linearGradient>
          <linearGradient id="finder" x2="0" y2="1"><stop stopColor="#8db4ee" /><stop offset="1" stopColor="#3a66c4" /></linearGradient>
          <linearGradient id="metal" x2="1" y2="1"><stop stopColor="#9a9a9a" /><stop offset=".35" stopColor="#f2f2f2" /><stop offset=".6" stopColor="#a9a9a9" /><stop offset="1" stopColor="#e2e2e2" /></linearGradient>
          <linearGradient id="blue" x2="0" y2="1"><stop stopColor="#6ca8e6" /><stop offset=".45" stopColor="#0d4fb4" /><stop offset="1" stopColor="#27b5fa" /></linearGradient>
          <linearGradient id="chat" x2="0" y2="1"><stop stopColor="#3c8cea" /><stop offset="1" stopColor="#6fd4fb" /></linearGradient>
          <linearGradient id="globe" x2="0" y2="1"><stop stopColor="#8fd0f2" /><stop offset="1" stopColor="#143c82" /></linearGradient>
          <linearGradient id="orange" x2="0" y2="1"><stop stopColor="#f59a31" /><stop offset="1" stopColor="#e9822c" /></linearGradient>
          <linearGradient id="silver" x2="0" y2="1"><stop stopColor="#c9c9c9" /><stop offset="1" stopColor="#7e7e7e" /></linearGradient>
          <linearGradient id="purple" x2="0" y2="1"><stop stopColor="#a992c8" /><stop offset=".4" stopColor="#5c3f86" /><stop offset=".6" stopColor="#9a7cc0" /><stop offset="1" stopColor="#efe8f8" /></linearGradient>
        </defs>
        <rect x="0" y="1694" width="2880" height="106" fill="url(#bgd)" />
        <rect x="0" y="1694" width="120" height="106" fill="url(#edge)" />
        <rect x="2790" y="1704" width="66" height="96" fill="url(#edgeR)" />
        <rect x="2857" y="1704" width="23" height="24" fill="#7a7a7a" /><path d="M2857 1714h23" stroke="#555" strokeWidth="2" /><rect x="2857" y="1728" width="23" height="72" fill="#1d3b63" />
        <path d="M418 1702v38M1947 1702v38M1986 1702v38M2384 1702v38" stroke="#4b4b4b" strokeWidth="2" />
        <path d="M460 1707h12v-5h132v5h14l-8 8 6 8h-30l-22 10-26-10h-72l6-8z" fill="#42302a" />
        <g fill="#242424" fontFamily="DejaVu Sans">
          <text x="484" y="1718" fontSize="19" fontWeight="700" textLength="112" lengthAdjust="spacingAndGlyphs" fontFamily="Noto Sans" fill="#5a5552">MAGENTO THEME</text>
          <text x="1161" y="1706" fontSize="23" textLength="422" lengthAdjust="spacingAndGlyphs">Magento 1.7.0.2, Magento 1.7.0.1, Magento</text>
          <text x="1161" y="1738" fontSize="23" textLength="387" lengthAdjust="spacingAndGlyphs">1.7.0.0, Magento 1.6.2.0, Magento 1.6.1</text>
          <text x="1741" y="1721" fontSize="22" textLength="92" lengthAdjust="spacingAndGlyphs">344 Sales</text>
          <text x="2008" y="1717" fontSize="24" textLength="165" lengthAdjust="spacingAndGlyphs" fill="#3a2f27">Site Templates</text>
        </g>
        <path d="M38 1694h2832q-6 8-16 8H48q-8 0-10-8z" fill="#676767" /><path d="M44 1702h2806" stroke="#424242" strokeWidth="1.500" />
        <path d="M138 1740h2605q8 0 11 7l27 45H99l29-46q3-6 10-6z" fill="url(#shelf)" opacity=".93" />
        <path d="M138 1740h2605q8 0 11 7l27 45H99l29-46q3-6 10-6z" fill="url(#shelfR)" />
        <path d="M99 1792h2683v8H101z" fill="#848d96" /><path d="M98 1792.500h2684" stroke="#f4f8fb" strokeWidth="2" />
      </svg>
      <div className="relative flex h-[106px] items-end pl-[130px]">
        {icons.map((ic, i) => <Cell key={i} {...ic} />)}
        <svg className="mb-4 h-9 w-[38px] shrink-0" viewBox="0 0 38 36"><path d="M13 1l12 33" stroke="#6f7b86" strokeWidth="1.500" /></svg>
        {minis.map((ic, i) => <Cell key={i} {...ic} />)}
      </div>
    </div>
  );
}

export default function App() {
  return (
    <div className="flex h-[1800px] w-[2880px] flex-col overflow-hidden bg-[#7b7b7b]">
      <MenuBar />
      <div className="flex h-[1650px] shrink-0 flex-col overflow-hidden rounded-t-lg bg-linear-to-b from-[#ececec] to-[#b8b8b8] to-[94px]">
        <div className={`relative flex h-12 shrink-0 items-center justify-center pb-[4px] text-[26px] leading-[44px] text-[#3a3a3a] ${noto}`}>
          <svg className="absolute top-[9px] left-[12px] h-6 w-[108px]" viewBox="0 0 108 24">
            {[['#ee4b4b', '#8c1f1f'], ['#f3ae4a', '#8f5e1a'], ['#86c860', '#447526']].map(([f, s], i) => (
              <g key={f}><circle cx={13.5 + i * 40} cy="12" r="10.500" fill={f} stroke={s} strokeWidth="2" /><ellipse cx={13.5 + i * 40} cy="7" rx="6" ry="3.500" fill="#fff" opacity=".6" /><ellipse cx={13.5 + i * 40} cy="18" rx="6" ry="3" fill="#fff" opacity=".35" /></g>
            ))}
          </svg>
          <Fit w={245} className="-ml-[4px]">Student application</Fit>
          <svg className="absolute top-[9px] right-[9px] h-7 w-[28px]" viewBox="0 0 28 28"><path d="M14 0h14v14l-4-4-6 6-5-5 6-6zM14 28H0V14l4 4 6-6 5 5-6 6z" fill="#8a8a8a" stroke="#cfcfcf" /></svg>
        </div>
        <TabStrip />
        <Toolbar />
        <div className="flex min-h-0 flex-1 border-t-2 border-[#555]">
          <Page />
          <div className="w-8 shrink-0 border-l-2 border-[#e4e4e4] bg-[#fafafa] pt-1 pl-[5px]">
            <div className="h-[1240px] w-[17px] rounded-full bg-[#c1c1c1]" />
          </div>
        </div>
      </div>
      <Desktop />
    </div>
  );
}
